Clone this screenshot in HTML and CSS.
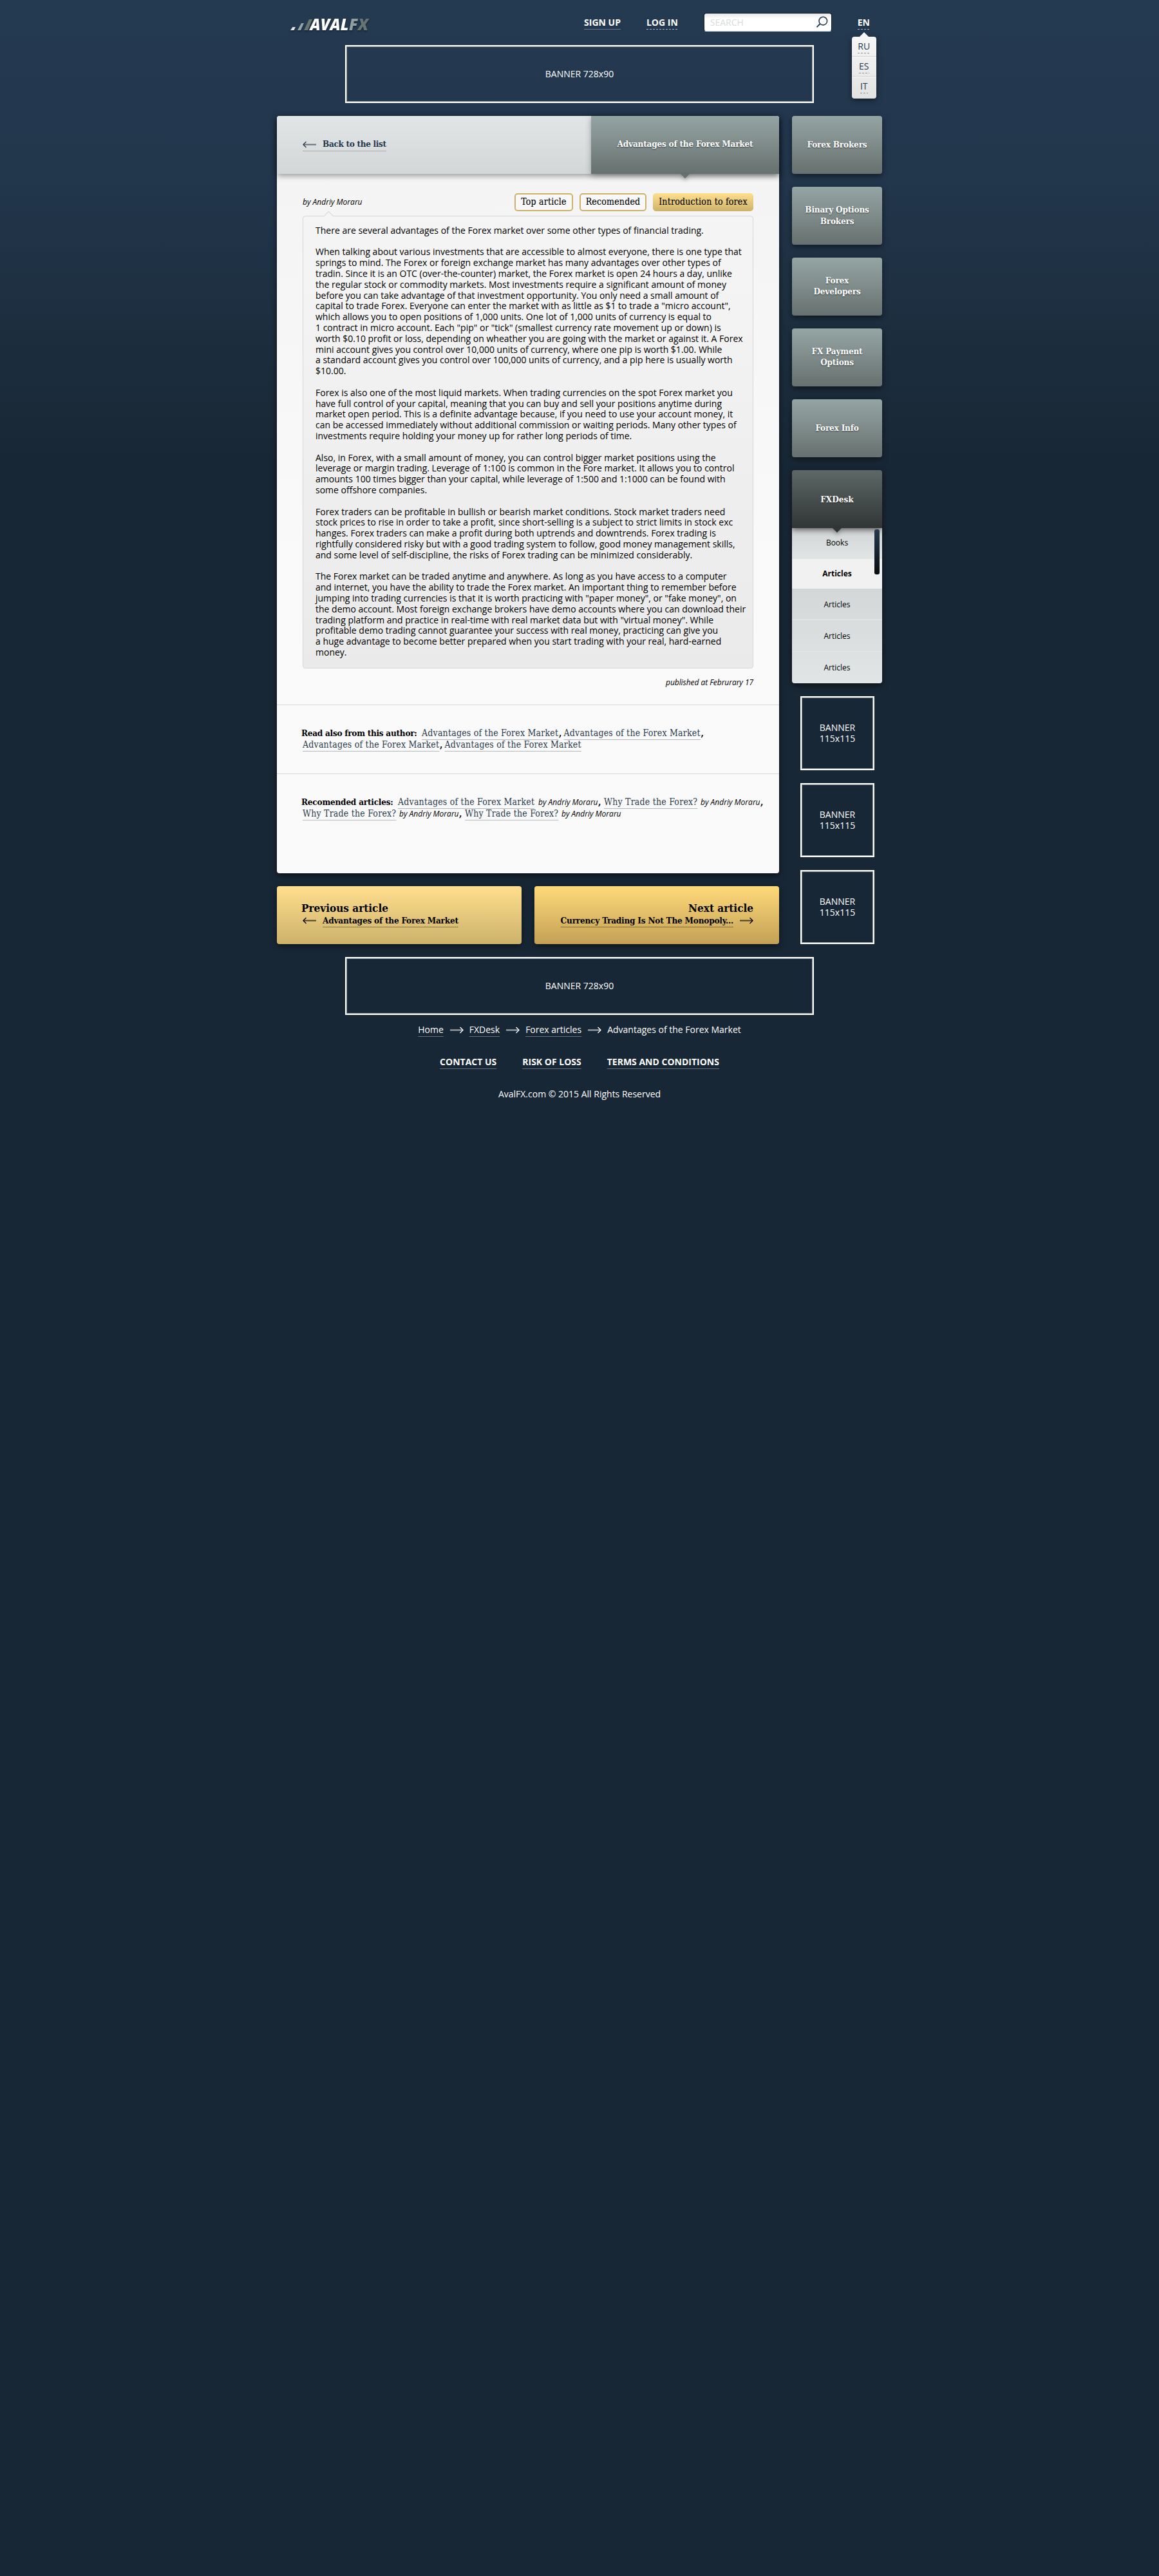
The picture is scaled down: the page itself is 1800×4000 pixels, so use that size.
FILE: index.html
```html
<!DOCTYPE html>
<html lang="en">
<head>
<meta charset="utf-8">
<title>AvalFX – Advantages of the Forex Market</title>
<link rel="stylesheet" href="styles.css">
</head>
<body>
<svg class="defs" width="0" height="0" aria-hidden="true">
  <symbol id="arrow-left" viewBox="0 0 21 11"><path d="M1 5.5H21" fill="none" stroke="currentColor" stroke-width="2" opacity=".65"/><path d="M5.5 1L1 5.5L5.5 10" fill="none" stroke="currentColor" stroke-width="1.3"/></symbol>
  <symbol id="arrow-right" viewBox="0 0 21 11"><path d="M0 5.5H20" fill="none" stroke="currentColor" stroke-width="2" opacity=".65"/><path d="M15.5 1L20 5.5L15.5 10" fill="none" stroke="currentColor" stroke-width="1.3"/></symbol>
</svg>
<div class="page">
  <header class="header">
    <a class="logo" aria-label="AvalFX">
      <svg width="150" height="44" viewBox="0 -8 150 44">
        <path d="M1 22L4.5 17H9L6.5 22Z" fill="#dfe3e3"/>
        <path d="M12 22L18 11H22L17 22Z" fill="#93a5a5"/>
        <path d="M22 22L30 5H35L28 22Z" fill="#687573"/>
        <text class="logo-text" x="31.5" y="22" fill="#fff">AVAL</text>
        <text class="logo-text" x="92" y="22" fill="#8f9f9e">F</text>
        <text class="logo-text" x="106" y="22" fill="#687472">X</text>
      </svg>
    </a>
    <nav class="top-nav">
      <a class="link">SIGN UP</a>
      <a class="dashed">LOG IN</a>
    </nav>
    <div class="search">
      <span>SEARCH</span>
      <svg width="19" height="19" viewBox="0 0 19 19"><circle cx="11.3" cy="7.6" r="6.3" fill="none" stroke="#25394d" stroke-width="1.6"/><path d="M6.6 12L1.5 17.2" stroke="#25394d" stroke-width="1.8"/></svg>
    </div>
    <div class="lang">
      <a class="dashed">EN</a>
      <ul class="lang-menu">
        <li><a class="dashed">RU</a></li>
        <li><a class="dashed">ES</a></li>
        <li><a class="dashed">IT</a></li>
      </ul>
    </div>
  </header>

  <div class="banner wide">BANNER 728x90</div>

  <div class="columns">
    <main class="main">
      <section class="card">
        <div class="card-head">
          <a class="back"><svg width="21" height="11"><use href="#arrow-left"/></svg><span>Back to the list</span></a>
          <h1 class="tab">Advantages of the Forex Market</h1>
        </div>
        <div class="meta">
          <em class="by">by Andriy Moraru</em>
          <div class="tags">
            <a class="tag">Top article</a>
            <a class="tag">Recomended</a>
            <a class="tag tag-active">Introduction to forex</a>
          </div>
        </div>
        <article class="article">
          <p>There are several advantages of the Forex market over some other types of financial trading.</p>
          <p>When talking about various investments that are accessible to almost everyone, there is one type that<br>
          springs to mind. The Forex or foreign exchange market has many advantages over other types of<br>
          tradin. Since it is an OTC (over-the-counter) market, the Forex market is open 24 hours a day, unlike<br>
          the regular stock or commodity markets. Most investments require a significant amount of money<br>
          before you can take advantage of that investment opportunity. You only need a small amount of<br>
          capital to trade Forex. Everyone can enter the market with as little as $1 to trade a "micro account",<br>
          which allows you to open positions of 1,000 units. One lot of 1,000 units of currency is equal to<br>
          1 contract in micro account. Each "pip" or "tick" (smallest currency rate movement up or down) is<br>
          worth $0.10 profit or loss, depending on wheather you are going with the market or against it. A Forex<br>
          mini account gives you control over 10,000 units of currency, where one pip is worth $1.00. While<br>
          a standard account gives you control over 100,000 units of currency, and a pip here is usually worth<br>
          $10.00.</p>
          <p>Forex is also one of the most liquid markets. When trading currencies on the spot Forex market you<br>
          have full control of your capital, meaning that you can buy and sell your positions anytime during<br>
          market open period. This is a definite advantage because, if you need to use your account money, it<br>
          can be accessed immediately without additional commission or waiting periods. Many other types of<br>
          investments require holding your money up for rather long periods of time.</p>
          <p>Also, in Forex, with a small amount of money, you can control bigger market positions using the<br>
          leverage or margin trading. Leverage of 1:100 is common in the Fore market. It allows you to control<br>
          amounts 100 times bigger than your capital, while leverage of 1:500 and 1:1000 can be found with<br>
          some offshore companies.</p>
          <p>Forex traders can be profitable in bullish or bearish market conditions. Stock market traders need<br>
          stock prices to rise in order to take a profit, since short-selling is a subject to strict limits in stock exc<br>
          hanges. Forex traders can make a profit during both uptrends and downtrends. Forex trading is<br>
          rightfully considered risky but with a good trading system to follow, good money management skills,<br>
          and some level of self-discipline, the risks of Forex trading can be minimized considerably.</p>
          <p>The Forex market can be traded anytime and anywhere. As long as you have access to a computer<br>
          and internet, you have the ability to trade the Forex market. An important thing to remember before<br>
          jumping into trading currencies is that it is worth practicing with "paper money", or "fake money", on<br>
          the demo account. Most foreign exchange brokers have demo accounts where you can download their<br>
          trading platform and practice in real-time with real market data but with "virtual money". While<br>
          profitable demo trading cannot guarantee your success with real money, practicing can give you<br>
          a huge advantage to become better prepared when you start trading with your real, hard-earned<br>
          money.</p>
        </article>
        <p class="published">published at Februrary 17</p>
        <div class="related related-author">
          <div class="row"><b class="label label-author">Read also from this author:</b><a class="link w-title">Advantages of the Forex Market</a><i>,</i><a class="link w-title">Advantages of the Forex Market</a><i>,</i></div>
          <div class="row row-next"><a class="link w-title">Advantages of the Forex Market</a><i>,</i><a class="link w-title">Advantages of the Forex Market</a></div>
        </div>
        <div class="related related-articles">
          <div class="row"><b class="label label-articles">Recomended articles:</b><a class="link w-title">Advantages of the Forex Market</a><em>by Andriy Moraru</em><i>,</i><a class="link w-why">Why Trade the Forex?</a><em>by Andriy Moraru</em><i>,</i></div>
          <div class="row row-next"><a class="link w-why">Why Trade the Forex?</a><em>by Andriy Moraru</em><i>,</i><a class="link w-why">Why Trade the Forex?</a><em>by Andriy Moraru</em></div>
        </div>
      </section>

      <div class="pager">
        <a class="pager-item prev">
          <strong>Previous article</strong>
          <span class="pager-line"><svg width="21" height="11"><use href="#arrow-left"/></svg><span class="link">Advantages of the Forex Market</span></span>
        </a>
        <a class="pager-item next">
          <strong>Next article</strong>
          <span class="pager-line"><span class="link">Currency Trading Is Not The Monopoly...</span><svg width="21" height="11"><use href="#arrow-right"/></svg></span>
        </a>
      </div>
    </main>

    <aside class="side">
      <a class="side-item">Forex Brokers</a>
      <a class="side-item">Binary Options<br>Brokers</a>
      <a class="side-item tight">Forex<br>Developers</a>
      <a class="side-item tight">FX Payment<br>Options</a>
      <a class="side-item">Forex Info</a>
      <div class="side-group">
        <a class="side-item side-open">FXDesk</a>
        <ul class="submenu">
          <li class="first">Books</li>
          <li class="current">Articles</li>
          <li>Articles</li>
          <li>Articles</li>
          <li>Articles</li>
        </ul>
        <div class="scrollbar"></div>
      </div>
      <div class="banner small">BANNER<br>115x115</div>
      <div class="banner small">BANNER<br>115x115</div>
      <div class="banner small">BANNER<br>115x115</div>
    </aside>
  </div>

  <div class="banner wide">BANNER 728x90</div>

  <footer class="footer">
    <div class="crumbs">
      <a class="link">Home</a><svg width="21" height="11"><use href="#arrow-right"/></svg><a class="link">FXDesk</a><svg width="21" height="11"><use href="#arrow-right"/></svg><a class="link">Forex articles</a><svg width="21" height="11"><use href="#arrow-right"/></svg><span>Advantages of the Forex Market</span>
    </div>
    <nav class="foot-nav"><a class="link">CONTACT US</a><a class="link">RISK OF LOSS</a><a class="link">TERMS AND CONDITIONS</a></nav>
    <p class="copy">AvalFX.com © 2015 All Rights Reserved</p>
  </footer>
</div>
</body>
</html>
```

FILE: styles.css
```css
* { box-sizing: border-box; margin: 0; padding: 0; }
ul { list-style: none; }
body {
  min-height: 4000px;
  background: #182735 linear-gradient(#243a50, #22364c 280px, #1d2f40 480px, #182735 720px) no-repeat;
  font: 14px/19px "Open Sans", sans-serif;
  color: #fff;
}
.defs { position: absolute; }
.page { width: 940px; margin: 0 auto; }

.link {
  text-decoration: underline 1px;
  text-underline-offset: 5px;
  text-decoration-skip-ink: none;
  text-decoration-color: rgba(255, 255, 255, .33);
}
.dashed {
  padding-bottom: 2px;
  background: repeating-linear-gradient(90deg, rgba(255, 255, 255, .6) 0 3px, transparent 3px 5px) 0 100% / 100% 1px no-repeat;
}

/* header */
.header { display: flex; align-items: flex-start; height: 70px; padding: 20px 19px 0 20px; }
.logo { margin-top: -3px; height: 44px; filter: drop-shadow(0 2px 1px rgba(0, 0, 0, .35)); }
.logo-text { font: italic 800 24px "Open Sans", sans-serif; }
.top-nav { display: flex; gap: 40px; margin: 5px 40px 0 auto; font-weight: 700; }
.search {
  display: flex; align-items: center; justify-content: space-between;
  width: 199px; height: 29px; margin-right: 40px; padding: 0 5px 1px 9px;
  border: 1px solid #101b26; border-bottom-color: #d8dadb; border-radius: 4px;
  background: linear-gradient(#e6e6e6, #fff 8px);
  color: #d9dcdc;
  box-shadow: 0 1px 1px rgba(20, 60, 90, .5);
}
.lang { position: relative; margin-top: 5px; font-weight: 700; }
.lang .dashed { display: block; }
.lang-menu {
  position: absolute; z-index: 2; left: -9px; top: 32px; width: 38px; height: 96px;
  border-radius: 4px; background: linear-gradient(#f6f6f6, #e2e2e2);
  font-weight: 400; color: #25384c;
  box-shadow: 0 3px 8px rgba(0, 0, 0, .5);
}
.lang-menu::before {
  content: ""; position: absolute; left: 12px; top: -7px;
  border: 7px solid transparent; border-top: 0; border-bottom-color: #f6f6f6;
}
.lang-menu li { display: flex; justify-content: center; height: 31px; padding-top: 5px; border-bottom: 1px solid #cfd3d3; }
.lang-menu li + li { box-shadow: inset 0 1px #fafafa; }
.lang-menu li:last-child { border: 0; }
.lang-menu .dashed { height: 21px; background-image: repeating-linear-gradient(90deg, #85909c 0 3px, transparent 3px 5px); }

/* banners */
.banner { display: flex; align-items: center; justify-content: center; text-align: center; border: 2px solid #fff; box-shadow: inset 0 0 0 1px #8e99a6; }
.wide { width: 728px; height: 90px; margin: 0 auto 20px; padding-bottom: 1px; }
.small { width: 115px; height: 115px; margin-left: 13px; line-height: 17px; padding-bottom: 1px; }

/* columns */
.columns { display: flex; gap: 20px; margin-bottom: 20px; }
.main { width: 780px; }
.card {
  height: 1176px; margin-bottom: 20px; border-radius: 4px; color: #000;
  background:
    repeating-linear-gradient(135deg, transparent 0 1.414px, rgba(0, 0, 0, .013) 1.414px 2.828px),
    linear-gradient(#f5f5f5, #fbfbfb 700px);
  box-shadow: 0 3px 10px rgba(0, 0, 0, .65);
}
.card-head {
  position: relative; display: flex; align-items: stretch; justify-content: space-between; height: 90px; padding-left: 40px;
  border-radius: 4px 4px 0 0; background: linear-gradient(#e1e5e5, #d3d7d7);
  box-shadow: 0 3px 10px rgba(0, 0, 0, .38);
}
.back, .tab, .tag, .side-item, .related, .pager { font-family: "Roboto Slab", "DejaVu Serif Condensed", "DejaVu Serif", serif; }
.back, .tab, .side-item, .label, .pager-line { font-size: 13.5px; font-weight: 700; letter-spacing: -.22px; }
.back {
  align-self: center; display: flex; align-items: center; gap: 10px; color: #25384b;
  height: 21px; padding-bottom: 2px; margin-top: -1px; border-bottom: 1px solid #a7acae; letter-spacing: -.34px;
}
.back svg { margin-top: 2px; }
.tab {
  position: relative; display: flex; align-items: center; justify-content: center; width: 292px; padding-bottom: 3px;
  border-radius: 0 4px 0 0; background: linear-gradient(#95a5a4, #67716f); color: #fff;
  text-shadow: 0 1px 2px rgba(0, 0, 0, .5);
  box-shadow: 0 3px 10px rgba(0, 0, 0, .3);
}
.tab::after, .side-open::after {
  content: ""; position: absolute; left: 50%; top: 100%; margin-left: -7px;
  border: 7px solid transparent; border-bottom: 0; border-top-color: #67716f;
  filter: drop-shadow(0 3px 3px rgba(0, 0, 0, .3));
}
.meta { display: flex; justify-content: space-between; padding: 30px 40px 7px; }
em { font: italic 12px/19px "Open Sans", sans-serif; }
.by { padding-top: 4px; }
.tags { display: flex; gap: 10px; }
.tag {
  width: 91px; height: 28px; padding-top: 2px; border: 2px solid #ccb26b; border-radius: 5px; text-align: center;
  background: #f8f8f8; font-size: 14px; letter-spacing: .21px; line-height: 19px; -webkit-text-stroke: .12px #000;
}
.tag:nth-child(2) { width: 104px; }
.tag-active { width: 156px; padding-top: 4px; border: 0; background: linear-gradient(#ffdf8e, #ccb26b); }
.article {
  position: relative; height: 703px; margin: 0 40px; padding: 13.9px 0 0 19px;
  border: 1px solid #d3d7d7; border-radius: 4px; background: linear-gradient(#f5f5f5, #eaeaea);
  line-height: 16.8px; white-space: nowrap;
}
.article::before {
  content: ""; position: absolute; left: 33.5px; top: -6px; width: 10px; height: 10px; transform: rotate(45deg);
  border: 1px solid #d3d7d7; border-width: 1px 0 0 1px; background: linear-gradient(135deg, #f5f5f5 50%, transparent 50%);
}
.article p + p { margin-top: 16.8px; }
.published { margin: 12px 40px 0 0; text-align: right; font: italic 12px/19px "Open Sans", sans-serif; letter-spacing: -.05px; }
.related { border-top: 1px solid #d3d7d7; font-size: 14px; padding: 34px 0 0 38px; letter-spacing: .21px; line-height: 18px; }
.related-author { height: 107px; margin-top: 25px; }
.row { display: flex; height: 18px; white-space: nowrap; }
.row-next { padding-left: 2px; }
.row .link { color: #2b3c4e; text-decoration-color: #b4b9bd; }
.row i { width: 7.5px; font-style: normal; font-weight: 700; }
.row em { width: 93px; margin-left: 5px; letter-spacing: 0; }
.row em + i { width: 9px; }
.label { line-height: 18px; letter-spacing: -.28px; }
.label-author { width: 187px; }
.label-articles { width: 150px; letter-spacing: -.23px; }
.w-title { width: 213px; }
.w-why { width: 145px; }

.pager { display: flex; gap: 20px; color: #000; }
.pager-item {
  display: flex; flex-direction: column; width: 380px; height: 90px; padding: 24px 40px 0 38px; border-radius: 4px;
  background: linear-gradient(#ffdf8e, #ccb26b); box-shadow: 0 3px 10px rgba(0, 0, 0, .55);
}
.pager-item strong { font-size: 17px; line-height: 20px; }
.pager-line { display: flex; align-items: center; gap: 10px; padding-left: 2px; line-height: 18px; }
.pager-line .link { text-decoration-color: rgba(0, 0, 0, .38); }
.next { align-items: flex-end; background: linear-gradient(#ffd978, #c2a157); }

/* sidebar */
.side { display: flex; flex-direction: column; gap: 20px; width: 140px; }
.side-item {
  display: flex; flex: none; align-items: center; justify-content: center; text-align: center;
  height: 90px; border-radius: 4px; background: linear-gradient(#95a5a4, #67716f);
  line-height: 18px; padding-bottom: 3px; text-shadow: 0 1px 2px rgba(0, 0, 0, .5);
  box-shadow: 0 3px 9px rgba(0, 0, 0, .5);
}
.tight { line-height: 17px; }
.side-group { position: relative; height: 331px; border-radius: 4px; box-shadow: 0 3px 9px rgba(0, 0, 0, .6); }
.side-open {
  position: relative; z-index: 1; border-radius: 4px 4px 0 0; letter-spacing: 0; padding-bottom: 1px;
  background: linear-gradient(#5d6867, #303635); box-shadow: 0 3px 9px rgba(40, 30, 40, .65);
}
.side-open::after { border-top-color: #303635; }
.submenu { height: 241px; color: #000; background: linear-gradient(#d3d7d7 94px, #e1e5e5); border-radius: 0 0 4px 4px; font-size: 12px; text-align: center; }
.submenu li { height: 49px; line-height: 50px; border-bottom: 1px solid #e8ebeb; }
.submenu li:last-child { border: 0; }
.submenu .first { height: 48px; line-height: 45px; background: linear-gradient(#d0d4d4, #e1e5e5); border: 0; }
.submenu .current { height: 46px; line-height: 45px; background: #f1f1f1; font-weight: 700; border: 0; }
.scrollbar { position: absolute; z-index: 2; left: 128px; top: 92px; width: 8px; height: 70px; border-radius: 3px; background: linear-gradient(#24384c, #0a0d10); }

/* footer */
.footer { margin-top: -7px; }
.crumbs { display: flex; align-items: center; justify-content: center; margin-bottom: 31px; }
.crumbs svg { margin: 1px 9px 0 10px; }
.foot-nav { display: flex; justify-content: center; gap: 40px; margin-bottom: 31px; font-weight: 700; }
.copy { text-align: center; }
```
